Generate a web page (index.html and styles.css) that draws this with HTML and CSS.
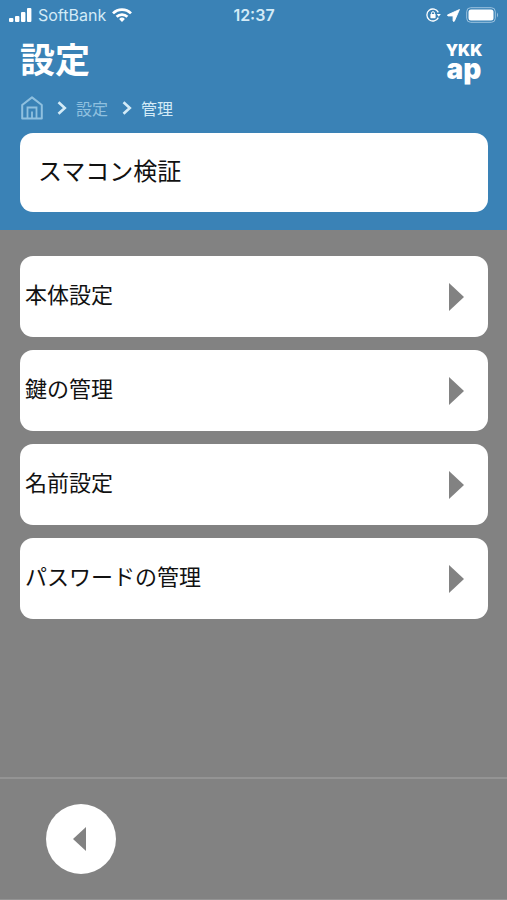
FILE: index.html
```html
<!DOCTYPE html>
<html lang="ja">
<head>
    <meta charset="UTF-8">
    <meta name="viewport" content="width=device-width, initial-scale=1.0">
    <title>設定</title>
    <link rel="stylesheet" href="styles.css">
</head>
<body>
    <header class="header">
        <div class="status-bar">
            <div class="status-left">
                <svg width="23" height="15" viewBox="0 0 23 15" fill="#fff" aria-hidden="true">
                    <rect x="0" y="10" width="4.4" height="4" rx="1"/>
                    <rect x="6" y="8" width="4.4" height="6" rx="1"/>
                    <rect x="12" y="4" width="4.4" height="10" rx="1"/>
                    <rect x="18" y="0" width="4.4" height="14" rx="1"/>
                </svg>
                <span class="carrier">SoftBank</span>
                <svg width="20" height="14" viewBox="0 0 20 14" fill="none" stroke="#fff" stroke-width="2.7" aria-hidden="true">
                    <path d="M1 5.4a12.6 12.6 0 0 1 18 0"/>
                    <path d="M4.6 8.8a7.6 7.6 0 0 1 10.8 0"/>
                    <path d="M10 14l-2.9-3a4.1 4.1 0 0 1 5.8 0z" fill="#fff" stroke="none"/>
                </svg>
            </div>
            <span class="time">12:37</span>
            <div class="status-right">
                <svg width="15" height="14" viewBox="0 0 15 14" fill="none" stroke="#fff" aria-hidden="true">
                    <path d="M12.3 4.4A6 6 0 1 0 12.3 9.6" stroke-width="1.3"/>
                    <path d="M10.8 6h4l-2 2.8z" fill="#fff" stroke="none"/>
                    <rect x="4.4" y="6" width="5.2" height="4.2" rx="0.6" fill="#fff" stroke="none"/>
                    <path d="M5.5 6.4V5.2a1.5 1.5 0 0 1 3 0v1.2"/>
                </svg>
                <svg width="13" height="13" viewBox="0 0 12 12" fill="#fff" stroke="#fff" stroke-width="0.8" stroke-linejoin="round" aria-hidden="true">
                    <path d="M11.5 0.5L0.6 5.4q-0.4 0.8 0.4 1H5.6V11q0.4 1 1.2 0.2z"/>
                </svg>
                <svg width="33" height="16" viewBox="0 0 33 16" fill="none" aria-hidden="true">
                    <rect x="0.7" y="0.7" width="28.6" height="14.6" rx="4" stroke="#9dc3df"/>
                    <rect x="2.5" y="2.5" width="25" height="11" rx="2.5" fill="#fff"/>
                    <path d="M31 5.5q2 2.5 0 5z" fill="#9dc3df"/>
                </svg>
            </div>
        </div>
        <div class="title-row">
            <h1>設定</h1>
            <div class="logo">
                <span class="logo-top">YKK</span>
                <span class="logo-bottom">ap</span>
            </div>
        </div>
        <nav class="breadcrumb" aria-label="パンくず">
            <a href="#" aria-label="ホーム">
                <svg width="22" height="24" viewBox="0 0 22 24" fill="none" stroke="#8fc0df" stroke-width="2" aria-hidden="true">
                    <path d="M1.2 9L11 1.4L20.8 9V22.6H1.2z" stroke-linejoin="round"/>
                    <path d="M6.5 22V11.5h9V22M11 22v-6.5" stroke-width="1.8"/>
                </svg>
            </a>
            <svg class="sep" width="10" height="14" viewBox="0 0 10 14" fill="none" stroke="#d3ebf7" stroke-width="2.6" aria-hidden="true">
                <path d="M1.5 1.2L7.8 7L1.5 12.8"/>
            </svg>
            <a href="#">設定</a>
            <svg class="sep" width="10" height="14" viewBox="0 0 10 14" fill="none" stroke="#d3ebf7" stroke-width="2.6" aria-hidden="true">
                <path d="M1.5 1.2L7.8 7L1.5 12.8"/>
            </svg>
            <span class="current">管理</span>
        </nav>
        <div class="card device">スマコン検証</div>
    </header>

    <main class="menu">
        <button type="button" class="card menu-item"><span class="label">本体設定</span><span class="arrow"></span></button>
        <button type="button" class="card menu-item"><span class="label">鍵の管理</span><span class="arrow"></span></button>
        <button type="button" class="card menu-item"><span class="label">名前設定</span><span class="arrow"></span></button>
        <button type="button" class="card menu-item"><span class="label">パスワードの管理</span><span class="arrow"></span></button>
    </main>

    <footer class="footer">
        <button type="button" class="back" aria-label="戻る"><span class="arrow arrow-left"></span></button>
    </footer>
</body>
</html>
```

FILE: styles.css
```css
* {
    box-sizing: border-box;
}
body {
    margin: 0;
    min-height: 100vh;
    display: flex;
    flex-direction: column;
    background-color: #828282;
    color: #111;
    font-family: "Noto Sans CJK JP", sans-serif;
}
.header {
    padding: 0 19px 18px 20px;
    background-color: #3a82b6;
    color: #fff;
}
.status-bar {
    display: grid;
    grid-template-columns: 1fr auto 1fr;
    align-items: center;
    height: 30px;
    margin: 0 -11px;
    font-family: Inter, sans-serif;
    font-size: 16px;
}
.status-left,
.status-right {
    display: flex;
    align-items: center;
    gap: 6px;
}
.status-right {
    justify-content: flex-end;
}
.carrier {
    color: #d3ebf7;
}
.time {
    color: #d3ebf7;
    font-weight: 600;
}
.title-row {
    display: flex;
    justify-content: space-between;
    height: 60px;
}
h1 {
    margin: 0;
    font-size: 35px;
    line-height: 56px;
    font-weight: 700;
}
.logo {
    display: flex;
    flex-direction: column;
    align-items: center;
    width: 38px;
    padding-top: 12px;
    margin-right: 5px;
    font-family: Inter, sans-serif;
    font-weight: 900;
}
.logo-top {
    font-size: 16px;
    line-height: 16px;
}
.logo-bottom {
    font-size: 28px;
    line-height: 22px;
}
.breadcrumb {
    display: flex;
    align-items: center;
    height: 36px;
    margin-bottom: 7px;
    padding-left: 1px;
    font-size: 16px;
}
.breadcrumb a {
    display: flex;
    color: #8fc0df;
    text-decoration: none;
}
.sep {
    margin: 0 9px 0 14px;
}
.current {
    color: #d3ebf7;
}
.card {
    display: flex;
    align-items: center;
    background-color: #fff;
    border: 0;
    border-radius: 13px;
    color: #111;
}
.device {
    height: 79px;
    padding: 0 18px 6px;
    font-size: 24px;
}
.menu {
    flex: 1;
    display: flex;
    flex-direction: column;
    gap: 13px;
    padding: 26px 19px 26px 20px;
}
.menu-item {
    justify-content: space-between;
    height: 81px;
    padding: 0 24px 0 5px;
    font-family: inherit;
    font-size: 22px;
    cursor: pointer;
}
.label {
    padding-bottom: 8px;
}
.arrow {
    border-style: solid;
    border-width: 14px 0 14px 15px;
    border-color: transparent transparent transparent #828282;
}
.footer {
    height: 123px;
    padding: 25px 46px;
    border-top: 2px solid #949494;
    border-bottom: 1px solid #949494;
}
.back {
    display: flex;
    align-items: center;
    justify-content: center;
    width: 70px;
    height: 70px;
    padding: 0 4px 0 0;
    border: 0;
    border-radius: 50%;
    background-color: #fff;
    cursor: pointer;
}
.arrow-left {
    border-width: 12px 13px 12px 0;
    border-color: transparent #828282 transparent transparent;
}
```
